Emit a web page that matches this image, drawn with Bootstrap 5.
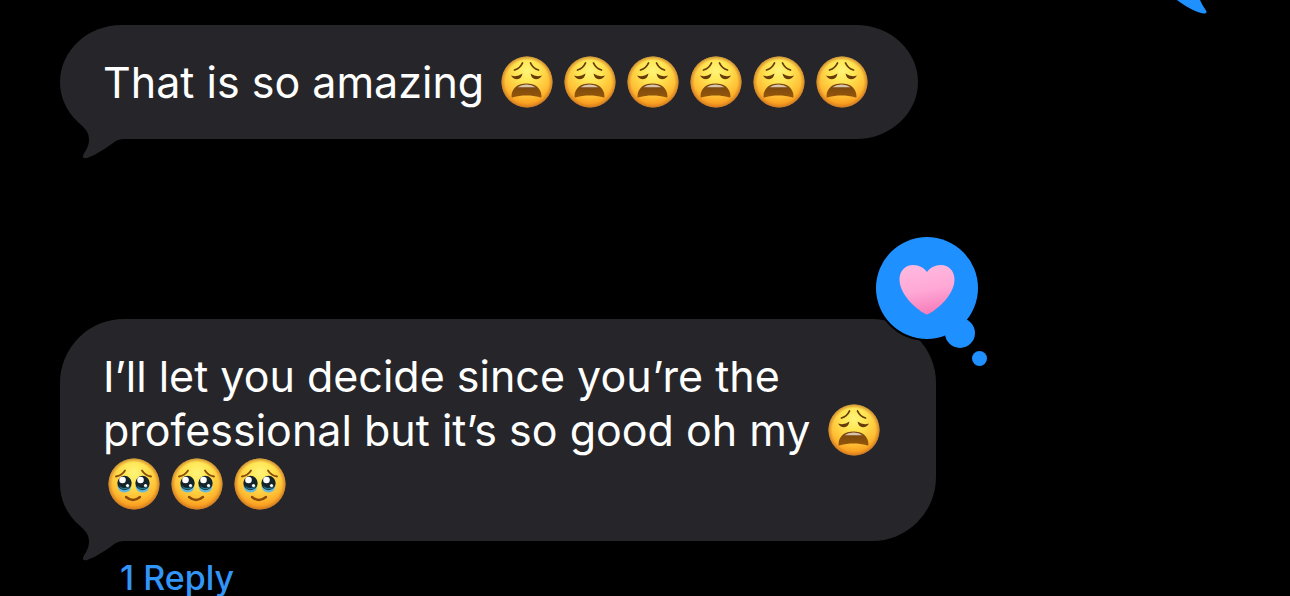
<!DOCTYPE html>
<html lang="en">
<head>
<meta charset="utf-8">
<meta name="viewport" content="width=device-width, initial-scale=1">
<title>Messages</title>
<link href="https://cdn.jsdelivr.net/npm/bootstrap@5.3.0/dist/css/bootstrap.min.css" rel="stylesheet">
<style>
  body { background: #000; color: #fff; font-family: Inter, "Liberation Sans", sans-serif; }
  .thread { padding: 0 60px; }
  .sent-end { height: 25px; padding-right: 22px; }
  .bubble { background: #26262a; border-radius: 64px; border-bottom-left-radius: 62px 57px; padding: 30px 44px 30px 43px; max-width: 876px; font-size: 43px; line-height: 54px; }
  .bubble-short { border-radius: 62px / 57px; }
  .bubble-tail { left: 20px; bottom: -20px; fill: #26262a; }
  .reaction { right: -54px; top: -84px; }
  .emoji { width: 52px; height: 52px; margin: 1px 6px 1px 5px; vertical-align: top; }
  .later { margin-top: 180px; }
  .reply-link { color: #3296f8; font-size: 34px; font-weight: 500; line-height: 36px; margin: 19px 0 0 60px; }
</style>
</head>
<body>
<svg width="0" height="0" class="position-absolute" aria-hidden="true">
  <defs>
    <radialGradient id="skin" cx="0.5" cy="0.28" r="0.74">
      <stop offset="0" stop-color="#fff478"/>
      <stop offset="0.3" stop-color="#ffe654"/>
      <stop offset="0.68" stop-color="#ffbe34"/>
      <stop offset="1" stop-color="#f58a14"/>
    </radialGradient>
    <radialGradient id="rim" cx="0.5" cy="0.5" r="0.5">
      <stop offset="0.84" stop-color="#d07a20" stop-opacity="0"/>
      <stop offset="1" stop-color="#b8702c" stop-opacity="0.7"/>
    </radialGradient>
    <linearGradient id="mouth" x1="0" y1="0" x2="0" y2="1">
      <stop offset="0" stop-color="#774411"/>
      <stop offset="1" stop-color="#94580a"/>
    </linearGradient>
    <linearGradient id="pink" x1="0.4" y1="0" x2="0.6" y2="1">
      <stop offset="0" stop-color="#ffb8de"/>
      <stop offset="0.5" stop-color="#ffa8d6"/>
      <stop offset="1" stop-color="#f57ab8"/>
    </linearGradient>
    <symbol id="weary" viewBox="0 0 52 52">
      <circle cx="26" cy="26" r="25.5" fill="url(#skin)"/>
      <circle cx="26" cy="26" r="25.5" fill="url(#rim)"/>
      <g fill="none" stroke="#673b08" stroke-width="1.8" stroke-linecap="round">
        <path d="M13.500 14Q19 12.500 21.500 7"/>
        <path d="M29.500 7Q32 12.500 37.500 14"/>
      </g>
      <path d="M10 19.500Q16 21.500 21.500 17.500Q20.500 23 16 23.200Q12 23.200 10 19.500Z" fill="#673b08"/>
      <path d="M41 19.500Q35 21.500 29.500 17.500Q30.500 23 35 23.200Q39 23.200 41 19.500Z" fill="#673b08"/>
      <path d="M10.500 40.500C10.500 32 17 27.500 25.500 27.500C34 27.500 40.500 32 40.500 40.500C40.500 41.800 39.800 41.700 38.800 41.200C31 39 20 39 12.200 41.200C11.200 41.700 10.500 41.800 10.500 40.500Z" fill="url(#mouth)"/>
      <path d="M16.500 31.200Q20 28.500 25.500 28.400Q31 28.500 34.500 31.200Q30 31.300 25.500 31.300Q21 31.300 16.500 31.200Z" fill="#d8c5ae"/>
    </symbol>
    <symbol id="tears" viewBox="0 0 52 52">
      <circle cx="26" cy="26" r="25.500" fill="url(#skin)"/>
      <circle cx="26" cy="26" r="25.500" fill="url(#rim)"/>
      <g fill="none" stroke="#8a4b08" stroke-width="1.800" stroke-linecap="round">
        <path d="M8 18.500Q14 17.500 17 12.500"/>
        <path d="M34 12.500Q37 17.500 43 18.500"/>
        <path d="M18 39Q25 45 32 39" stroke-width="2.400"/>
      </g>
      <g id="wet-eye">
        <path d="M9.500 28H23Q23 34.500 16.500 34.500Q10.500 34.500 9.500 28Z" fill="#64b9dc"/>
        <circle cx="16.500" cy="25" r="7.200" fill="#14242b"/>
        <path d="M11 27.500Q16 32.500 22 27.500Q20.500 31.500 16.500 31.500Q12.500 31.500 11 27.500Z" fill="#247b98"/>
        <circle cx="14.500" cy="22" r="3.300" fill="#fff"/>
        <circle cx="19.500" cy="27.500" r="1.600" fill="#fff"/>
      </g>
      <use href="#wet-eye" x="18"/>
    </symbol>
    <symbol id="tail" viewBox="0 0 46 40">
      <path d="M0 5C6 10 9 14 9 21C9 27 5.500 32 3.500 35.500C2 38.500 3.500 40 7 39C17 35.500 26 29 33 24C37 21 39 20 46 20L36 2Z"/>
    </symbol>
  </defs>
</svg>

<main class="thread d-flex flex-column align-items-start">
  <div class="sent-end w-100 d-flex justify-content-end align-items-start">
    <svg width="32" height="14" viewBox="0 0 32 14" aria-hidden="true"><path d="M1 0C9 6 17 11 27 13.500Q32 14 30 10.500Q26 5 24 0Z" fill="#1e90ff"/></svg>
  </div>

  <div class="bubble bubble-short position-relative">
    <svg class="bubble-tail position-absolute" width="46" height="40" aria-hidden="true"><use href="#tail"/></svg>
    That is so amazing <svg class="emoji" role="img" aria-label="weary face"><use href="#weary"/></svg><svg class="emoji" role="img" aria-label="weary face"><use href="#weary"/></svg><svg class="emoji" role="img" aria-label="weary face"><use href="#weary"/></svg><svg class="emoji" role="img" aria-label="weary face"><use href="#weary"/></svg><svg class="emoji" role="img" aria-label="weary face"><use href="#weary"/></svg><svg class="emoji" role="img" aria-label="weary face"><use href="#weary"/></svg>
  </div>

  <div class="bubble later position-relative">
    <svg class="bubble-tail position-absolute" width="46" height="40" aria-hidden="true"><use href="#tail"/></svg>
    I’ll let you decide since you’re the professional but it’s so good oh my <svg class="emoji" role="img" aria-label="weary face"><use href="#weary"/></svg><svg class="emoji" role="img" aria-label="face holding back tears"><use href="#tears"/></svg><svg class="emoji" role="img" aria-label="face holding back tears"><use href="#tears"/></svg><svg class="emoji" role="img" aria-label="face holding back tears"><use href="#tears"/></svg>
    <svg class="reaction position-absolute" width="116" height="134" viewBox="0 0 116 134" role="img" aria-label="Loved">
      <g stroke="#000" stroke-width="4"><circle cx="53" cy="53" r="51"/><circle cx="86" cy="98" r="15"/></g>
      <g fill="#1e90ff"><circle cx="53" cy="53" r="51"/><circle cx="86" cy="98" r="15"/><circle cx="105.500" cy="123.500" r="7.500"/></g>
      <path d="M53 79.500C50 79.500 25.500 63 25.500 44.500C25.500 35.500 31.500 30 39 30C45.500 30 50 33 53 37C56 33 60.500 30 67 30C74.500 30 80.500 35.500 80.500 44.500C80.500 63 56 79.500 53 79.500Z" fill="url(#pink)"/>
    </svg>
  </div>

  <a class="reply-link text-decoration-none" href="#">1 Reply</a>
</main>
<script src="https://cdn.jsdelivr.net/npm/bootstrap@5.3.0/dist/js/bootstrap.bundle.min.js"></script>
</body>
</html>
